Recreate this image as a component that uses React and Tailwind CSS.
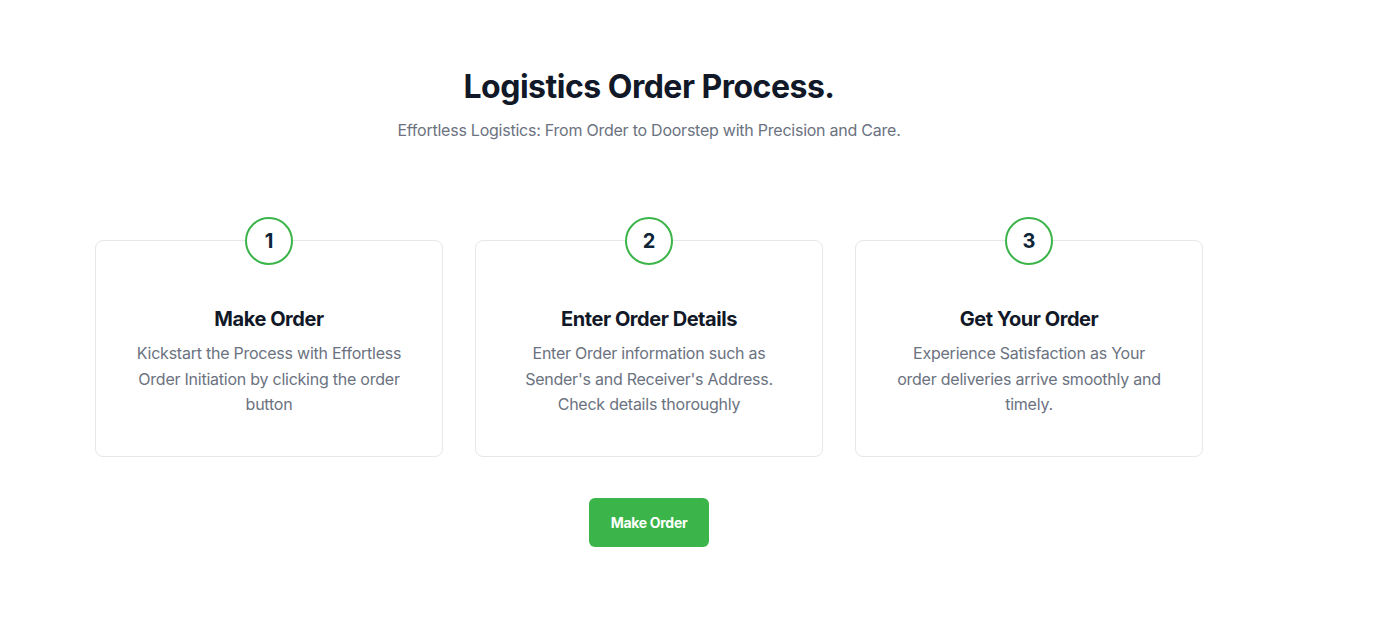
import React from "react";

const steps = [
  {
    n: "1",
    title: "Make Order",
    desc: "Kickstart the Process with Effortless Order Initiation by clicking the order button",
  },
  {
    n: "2",
    title: "Enter Order Details",
    desc: "Enter Order information such as Sender's and Receiver's Address. Check details thoroughly",
  },
  {
    n: "3",
    title: "Get Your Order",
    desc: "Experience Satisfaction as Your order deliveries arrive smoothly and timely.",
  },
];

export default function App() {
  return (
    <div
      className="min-h-[644px] w-full bg-white"
      style={{ fontFamily: "Inter, 'Noto Sans', sans-serif" }}
    >
      <div className="ml-[95px] w-[1108px] pt-[67px] flex flex-col items-center">
        <h1 className="text-[32px] leading-[40px] font-bold text-[#111827] tracking-[-0.5px]">
          Logistics Order Process.
        </h1>
        <p className="mt-[11px] text-[16px] leading-[24px] text-[#6b7280] tracking-[-0.24px]">
          Effortless Logistics: From Order to Doorstep with Precision and Care.
        </p>
        <div className="mt-[98px] grid grid-cols-3 gap-8 w-full">
          {steps.map((s) => (
            <div
              key={s.n}
              className="relative border border-[#e5e7eb] rounded-lg bg-white px-10 pt-16 pb-[38px] text-center"
            >
              <div className="absolute left-1/2 -translate-x-1/2 -top-[24px] w-12 h-12 rounded-full border-2 border-[#3bb54a] bg-white flex items-center justify-center">
                <span className="text-[20px] font-bold text-[#0f2437]">{s.n}</span>
              </div>
              <h3 className="text-[20px] leading-[28px] font-bold text-[#111827] tracking-[-0.45px]">
                {s.title}
              </h3>
              <p className="mt-[8px] text-[16px] leading-[25.6px] text-[#6b7280] tracking-[-0.24px]">
                {s.desc}
              </p>
            </div>
          ))}
        </div>
        <button className="mt-[41px] w-[120px] h-[49px] rounded-md bg-[#3bb54a] text-white text-[14px] font-bold tracking-[-0.3px]">
          Make Order
        </button>
      </div>
    </div>
  );
}
